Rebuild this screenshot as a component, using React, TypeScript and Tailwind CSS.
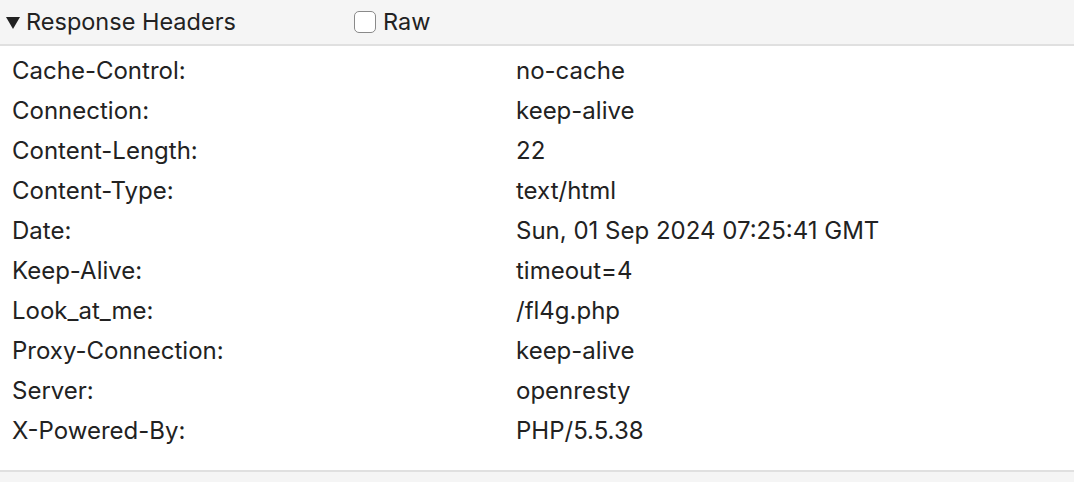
const headers: [string, string][] = [
  ['Cache-Control:', 'no-cache'],
  ['Connection:', 'keep-alive'],
  ['Content-Length:', '22'],
  ['Content-Type:', 'text/html'],
  ['Date:', 'Sun, 01 Sep 2024 07:25:41 GMT'],
  ['Keep-Alive:', 'timeout=4'],
  ['Look_at_me:', '/fl4g.php'],
  ['Proxy-Connection:', 'keep-alive'],
  ['Server:', 'openresty'],
  ['X-Powered-By:', 'PHP/5.5.38'],
]

export default function App() {
  return (
    <div
      className="flex h-[482px] w-[1074px] flex-col bg-white text-[#222]"
      style={{ fontFamily: 'Inter, "Liberation Sans", sans-serif' }}
    >
      {/* Section header */}
      <div className="flex h-[46px] items-center border-b-2 border-[#e0e0e0] bg-[#f5f5f5] pl-[6px] text-[23.5px]">
        <svg width="14" height="12" viewBox="0 0 14 12" className="mt-[1px]">
          <path d="M0 0 H14 L7 12 Z" fill="#222" />
        </svg>
        <span className="ml-[6px] w-[328px]">Response Headers</span>
        <span className="h-[22px] w-[22px] rounded-[5px] border-[1.5px] border-[#8a8a8a] bg-white" />
        <span className="ml-[7px]">Raw</span>
      </div>

      {/* Rows */}
      <div className="flex-1 pt-[5px] pl-[12px] text-[24px]">
        {headers.map(([k, v]) => (
          <div key={k} className="flex h-[40px] items-center">
            <span className="w-[504px]">{k}</span>
            <span>{v}</span>
          </div>
        ))}
      </div>

      <div className="h-[12px] border-t-2 border-[#e0e0e0] bg-[#f5f5f5]" />
    </div>
  )
}
